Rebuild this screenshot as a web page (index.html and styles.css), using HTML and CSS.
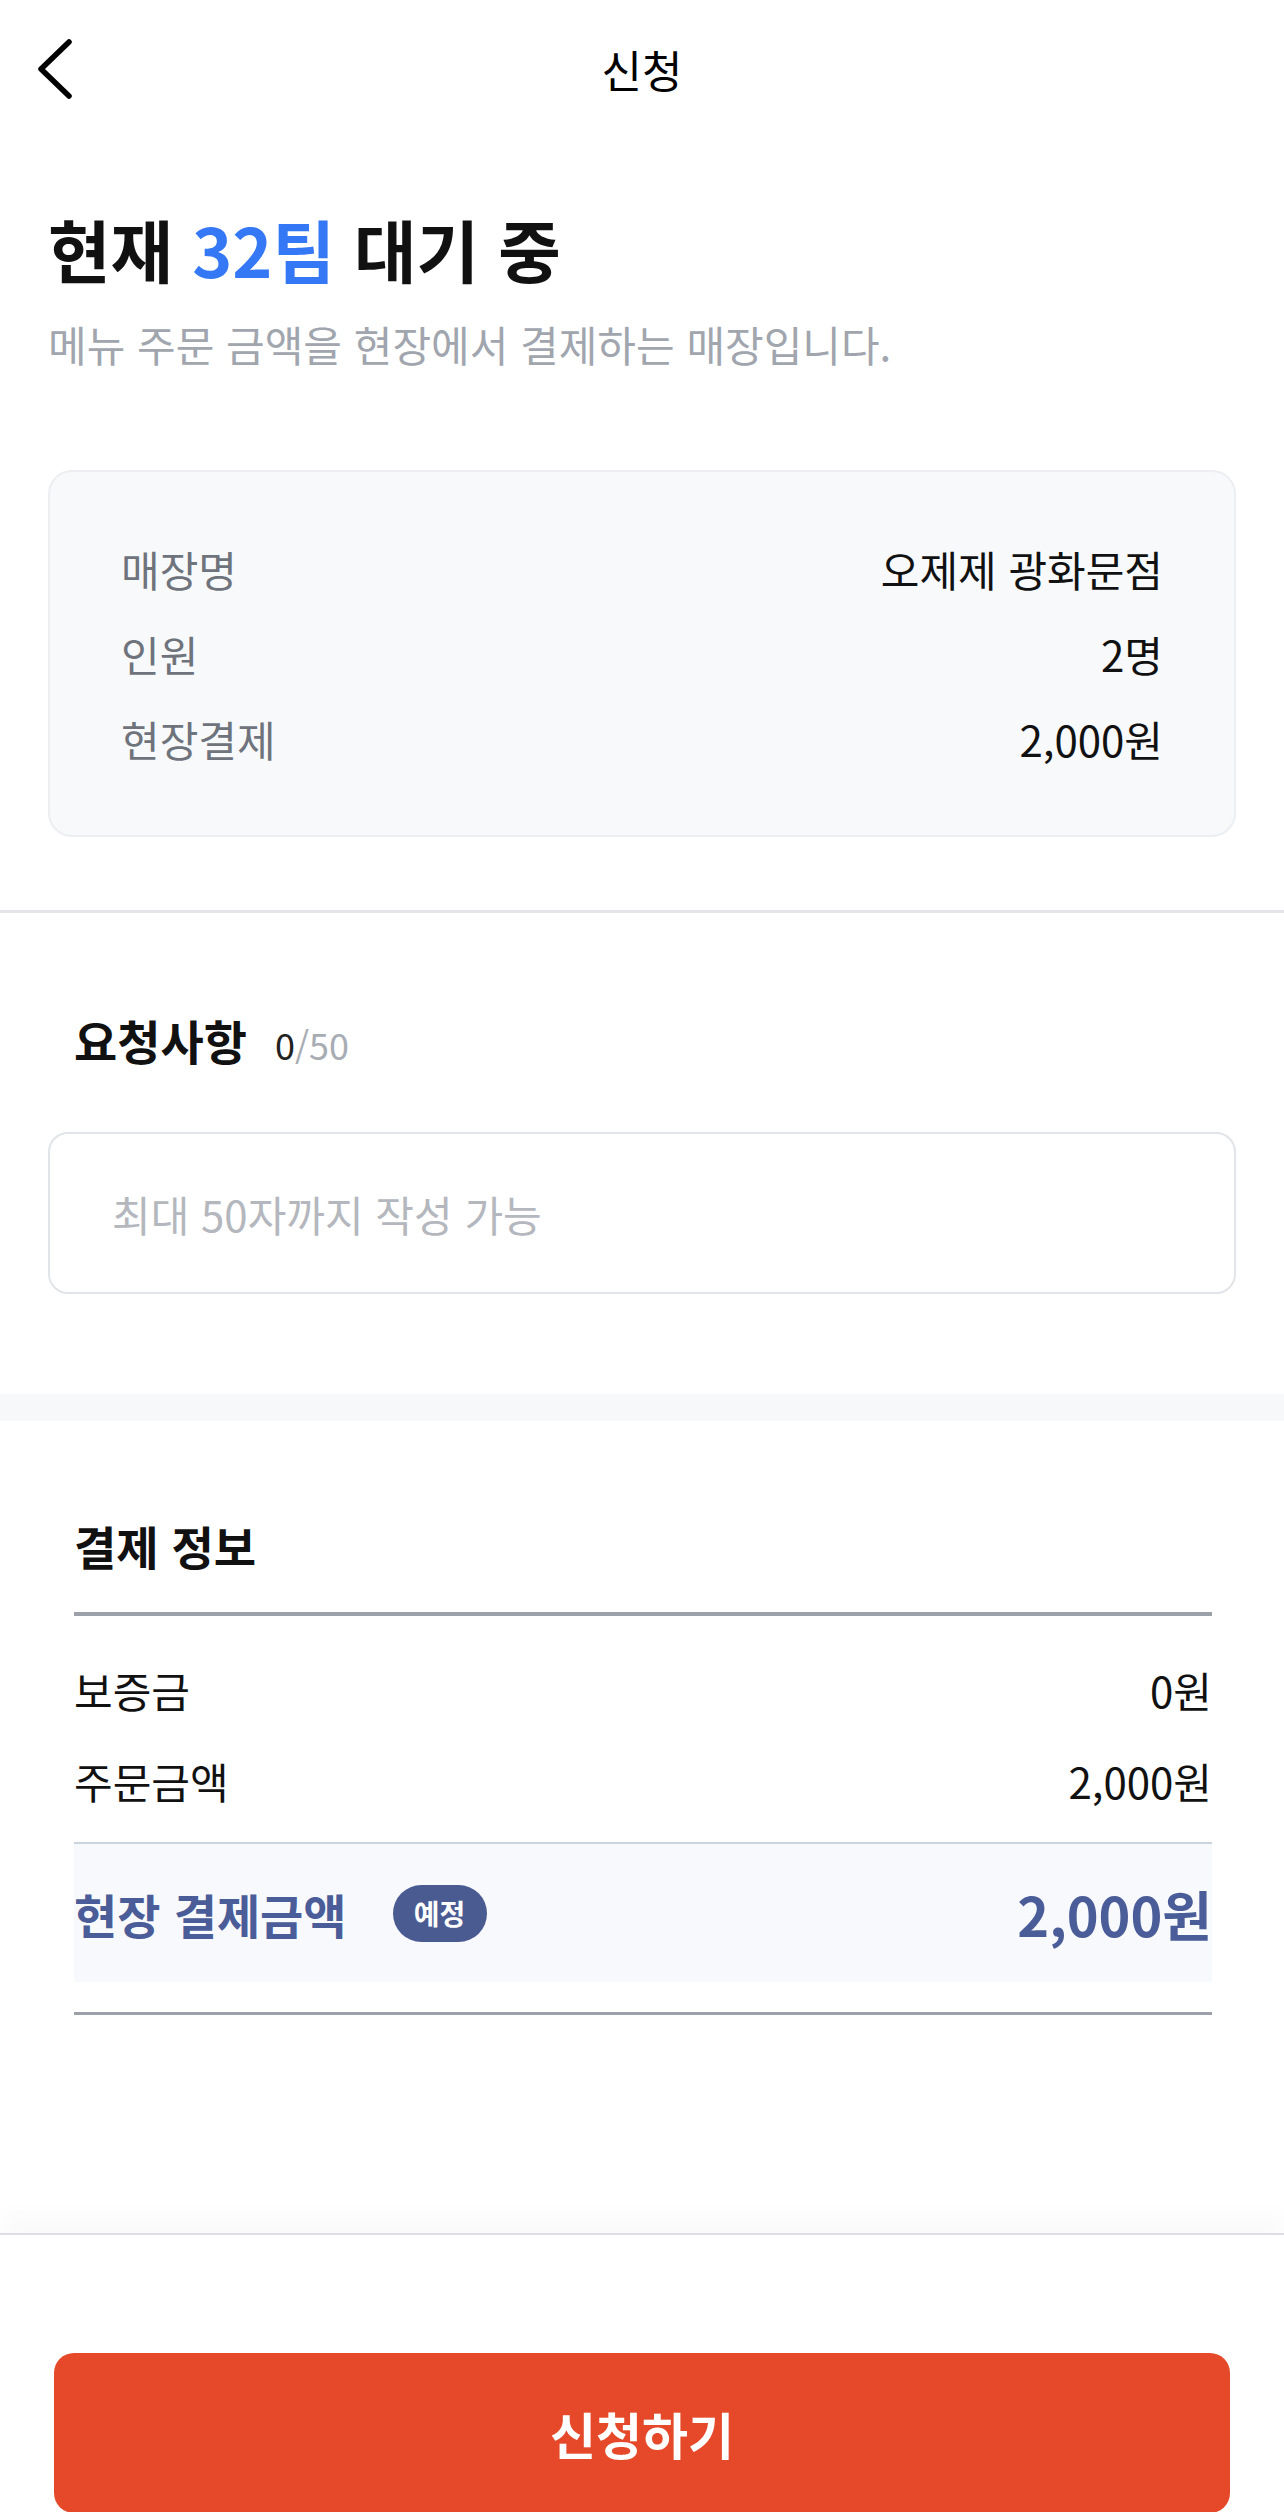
FILE: index.html
```html
<!DOCTYPE html>
<html lang="ko">
<head>
<meta charset="utf-8">
<title>신청</title>
<link rel="stylesheet" href="styles.css">
</head>
<body>
<div class="page">
  <header class="topbar">
    <div class="topbar-left">
      <svg class="back" width="40" height="60" viewBox="0 0 40 60" aria-hidden="true">
        <path d="M31 3 L3 30 L31 57" fill="none" stroke="#000" stroke-width="5.5" stroke-linecap="round" stroke-linejoin="round"/>
      </svg>
    </div>
    <h1 class="topbar-title">신청</h1>
    <div class="topbar-right"></div>
  </header>

  <section class="intro">
    <h2 class="wait-title">현재 <span class="accent">32팀</span> 대기 중</h2>
    <p class="wait-sub">메뉴 주문 금액을 현장에서 결제하는 매장입니다.</p>
  </section>

  <section class="summary">
    <div class="summary-row"><span class="s-label">매장명</span><span class="s-value">오제제 광화문점</span></div>
    <div class="summary-row"><span class="s-label">인원</span><span class="s-value">2명</span></div>
    <div class="summary-row"><span class="s-label">현장결제</span><span class="s-value">2,000원</span></div>
  </section>

  <hr class="divider">

  <section class="request">
    <div class="request-head">
      <span class="request-title">요청사항</span>
      <span class="counter"><span class="count-now">0</span>/50</span>
    </div>
    <div class="request-input">최대 50자까지 작성 가능</div>
  </section>

  <div class="band"></div>

  <section class="payinfo">
    <h3 class="pay-title">결제 정보</h3>
    <div class="pay-rule"></div>
    <div class="pay-rows">
      <div class="pay-row"><span>보증금</span><span>0원</span></div>
      <div class="pay-row"><span>주문금액</span><span>2,000원</span></div>
    </div>
    <div class="pay-thin"></div>
    <div class="pay-total">
      <div class="total-left"><span class="total-label">현장 결제금액</span><span class="badge">예정</span></div>
      <span class="total-value">2,000원</span>
    </div>
    <div class="pay-rule bottom"></div>
  </section>

  <footer class="footer">
    <button class="submit" type="button">신청하기</button>
  </footer>
</div>
</body>
</html>
```

FILE: styles.css
```css
* { box-sizing: border-box; }
html, body {
  margin: 0;
  padding: 0;
  height: 2512px;
  overflow: hidden;
  background: #fff;
}
body {
  font-family: "Noto Sans CJK KR", "Noto Sans", sans-serif;
  color: #111;
}
.page {
  width: 1284px;
  height: 2512px;
  display: flex;
  flex-direction: column;
}
.topbar {
  height: 138px;
  display: grid;
  grid-template-columns: 1fr auto 1fr;
  align-items: center;
}
.topbar-left {
  padding-left: 38px;
  display: flex;
  align-items: center;
}
.back { display: block; }
.topbar-title {
  margin: 0;
  font-size: 44px;
  font-weight: 400;
  line-height: 138px;
  color: #000;
}
.intro {
  padding: 71px 48px 0;
}
.wait-title {
  margin: 0;
  font-size: 68px;
  font-weight: 700;
  line-height: 80px;
  color: #111;
}
.accent { color: #3478f6; }
.wait-sub {
  margin: 27px 0 0;
  font-size: 42px;
  line-height: 56px;
  color: #a0a5ae;
  font-weight: 400;
}
.summary {
  margin: 98px 48px 0;
  border: 2px solid #eceef1;
  border-radius: 24px;
  background: #f8f9fb;
  padding: 54px 71px 54px;
}
.summary-row {
  display: flex;
  justify-content: space-between;
  align-items: center;
  height: 85px;
  font-size: 42px;
}
.s-label { color: #6e737c; }
.s-value { color: #111; }
.divider {
  margin: 73px 0 0;
  border: 0;
  height: 3px;
  background: #e3e5e9;
}
.request {
  padding: 97px 48px 0;
}
.request-head {
  display: flex;
  align-items: baseline;
  gap: 28px;
  padding-left: 26px;
  height: 60px;
  line-height: 60px;
}
.request-title {
  font-size: 47px;
  font-weight: 700;
  color: #111;
}
.counter {
  font-size: 36px;
  color: #a8acb3;
}
.count-now { color: #222; }
.request-input {
  margin-top: 62px;
  height: 162px;
  border: 2px solid #e1e4e8;
  border-radius: 20px;
  display: flex;
  align-items: center;
  padding-left: 62px;
  font-size: 42px;
  color: #b4b7bd;
}
.band {
  margin-top: 100px;
  height: 27px;
  background: #f7f8fa;
}
.payinfo {
  padding: 94px 72px 0 74px;
}
.pay-title {
  margin: 0;
  font-size: 46px;
  font-weight: 700;
  line-height: 60px;
  color: #111;
}
.pay-rule {
  margin-top: 37px;
  height: 4px;
  background: #9ca1a9;
}
.pay-rule.bottom {
  margin-top: 30px;
  height: 3px;
}
.pay-rows {
  padding: 28px 0 16px;
}
.pay-row {
  display: flex;
  justify-content: space-between;
  align-items: center;
  height: 91px;
  font-size: 42px;
  color: #111;
}
.pay-thin {
  height: 2px;
  background: #cad4dc;
}
.pay-total {
  height: 138px;
  background: #f7f9fc;
  display: flex;
  align-items: center;
  justify-content: space-between;
  color: #4b5d98;
}
.total-left {
  display: flex;
  align-items: center;
  gap: 46px;
}
.total-label {
  font-size: 47px;
  font-weight: 700;
}
.badge {
  width: 94px;
  height: 57px;
  border-radius: 29px;
  background: #4a5b92;
  color: #fff;
  font-size: 28px;
  font-weight: 700;
  display: flex;
  align-items: center;
  justify-content: center;
}
.total-value {
  font-size: 54px;
  font-weight: 700;
}
.footer {
  margin-top: auto;
  height: 279px;
  border-top: 2px solid #dcdee4;
  box-shadow: 0 -18px 24px rgba(0, 0, 0, 0.025);
  padding: 118px 54px 0;
  background: #fff;
}
.submit {
  display: block;
  width: 100%;
  height: 160px;
  border: 0;
  border-radius: 20px;
  background: #e5492a;
  color: #fff;
  font-family: "Noto Sans CJK KR", "Noto Sans", sans-serif;
  font-size: 50px;
  font-weight: 700;
}
```
